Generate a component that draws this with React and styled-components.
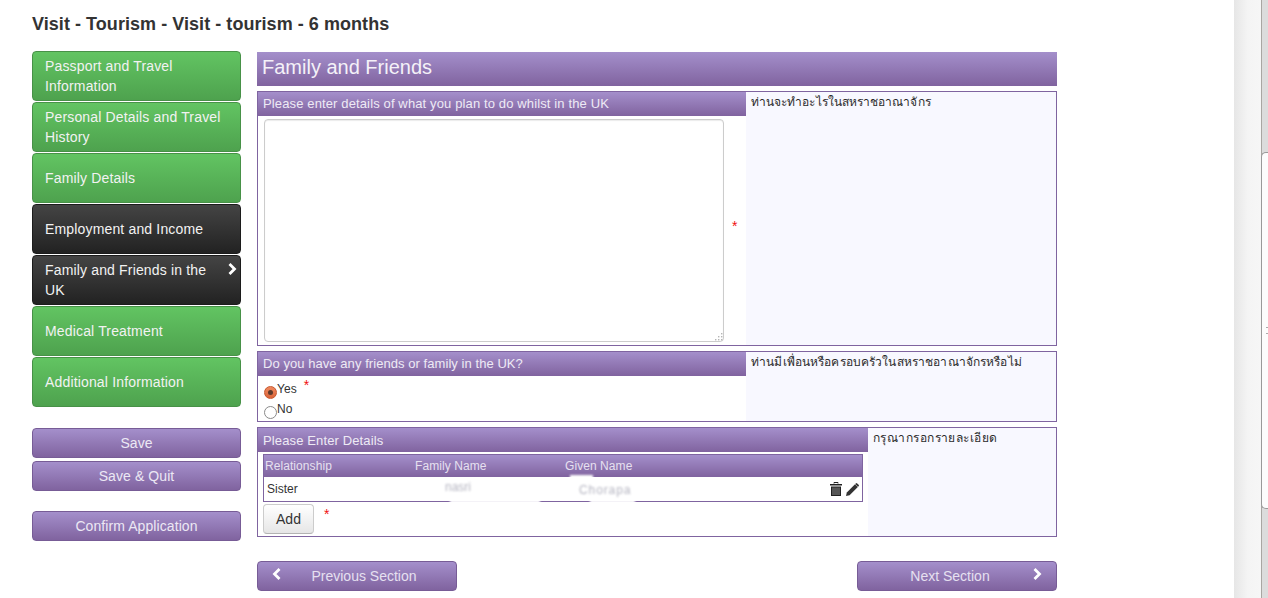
import React from 'react'
import styled, { createGlobalStyle, css } from 'styled-components'

const GlobalStyle = createGlobalStyle`
  html, body { margin: 0; padding: 0; background: #fff; overflow: hidden; }
  body { font-family: "Liberation Sans", Arial, sans-serif; color: #222; }
`

const purple = css`
  background: linear-gradient(to bottom, #a48fcb, #80639f);
`

const Shell = styled.div`
  display: flex;
  width: 1268px;
  height: 598px;
  overflow: hidden;
`

const Content = styled.div`
  width: 1202px;
  padding: 14px 0 0 32px;
`

const Title = styled.h1`
  margin: 0 0 17px;
  font-size: 18px;
  line-height: 20px;
  font-weight: bold;
  letter-spacing: 0.05px;
  color: #333;
`

const Columns = styled.div`
  display: flex;
  gap: 16px;
`

const Sidebar = styled.nav`
  width: 209px;
  flex: none;
`

const Steps = styled.div`
  display: flex;
  flex-direction: column;
  gap: 1px;
  margin-bottom: 21px;
`

const Step = styled.a`
  position: relative;
  box-sizing: border-box;
  display: flex;
  align-items: center;
  height: 50px;
  padding: 0 16px 0 12px;
  border-radius: 4px;
  font-size: 14px;
  line-height: 20px;
  letter-spacing: 0.16px;
  color: #f2f2f2;
  border: 1px solid ${p => (p.$done ? '#479147' : '#1c1c1c')};
  background: ${p => (p.$done
    ? 'linear-gradient(to bottom, #62c462, #4ea24e)'
    : 'linear-gradient(to bottom, #444, #222)')};
`

const StepName = styled.span`
  width: ${p => (p.$narrow ? '170px' : 'auto')};
`

const StepArrow = styled.svg`
  position: absolute;
  top: 7px;
  right: 3px;
  width: 10px;
  height: 12px;
`

const SideButton = styled.button`
  display: block;
  box-sizing: border-box;
  width: 209px;
  height: 30px;
  padding: 0;
  margin-top: ${p => p.$gap || 0}px;
  border: 1px solid #775c96;
  border-radius: 4px;
  ${purple}
  font-family: inherit;
  font-size: 14px;
  letter-spacing: 0.08px;
  color: #ece8f4;
`

const Main = styled.main`
  width: 800px;
  flex: none;
  padding-top: 1px;
`

const SectionTitle = styled.h2`
  margin: 0 0 5px;
  height: 34px;
  padding-left: 5px;
  ${purple}
  font-size: 20px;
  font-weight: normal;
  line-height: 31px;
  color: #f4f1f8;
`

const Section = styled.section`
  box-sizing: border-box;
  display: flex;
  height: ${p => p.$height}px;
  margin-bottom: 5px;
  border: 1px solid #7f64a0;
`

const Body = styled.div`
  width: ${p => p.$width}px;
  flex: none;
  min-width: 0;
`

const Hint = styled.div`
  flex: 1;
  padding: 1px 0 0 5px;
  background: #f8f8ff;
  font-family: "Liberation Sans", "Noto Sans", "DejaVu Sans", sans-serif;
  font-size: 12px;
  line-height: 18px;
  letter-spacing: ${p => p.$spacing}px;
  color: #2c2c2c;
`

const Label = styled.div`
  height: 24px;
  padding-left: 5px;
  ${purple}
  font-size: 13px;
  line-height: ${p => p.$line || 24}px;
  letter-spacing: ${p => p.$spacing ?? 0.13}px;
  color: #eeeaf5;
`

const AreaRow = styled.div`
  display: flex;
  align-items: center;
  padding: 3px 0 0 6px;
`

const AreaWrap = styled.div`
  position: relative;
  width: 460px;
  height: 223px;
`

const Area = styled.textarea`
  box-sizing: border-box;
  display: block;
  width: 100%;
  height: 100%;
  padding: 4px 6px;
  border: 1px solid #ccc;
  border-radius: 4px;
  box-shadow: inset 0 1px 1px rgba(0, 0, 0, 0.08);
  background: #fff;
  resize: none;
`

const Grip = styled.svg`
  position: absolute;
  right: 1px;
  bottom: 1px;
  width: 9px;
  height: 9px;
`

const Star = styled.span`
  color: #f01010;
  font-size: 14px;
  line-height: 12px;
  margin-left: ${p => p.$left || 0}px;
  margin-top: ${p => p.$top || 0}px;
  margin-bottom: ${p => p.$bottom || 0}px;
`

const RadioRow = styled.div`
  display: flex;
  align-items: flex-start;
  height: 20px;
  padding-left: 6px;
  font-size: 12px;
  line-height: 20px;
  letter-spacing: 0.08px;
  color: #333;
`

const RadioGroup = styled.div`
  padding-top: 3px;
`

const Radio = styled.span`
  box-sizing: border-box;
  display: flex;
  align-items: center;
  justify-content: center;
  width: 13px;
  height: 13px;
  margin-top: 7px;
  border-radius: 50%;
  border: 1px solid ${p => (p.$on ? '#c7562c' : '#8a8a8a')};
  background: ${p => (p.$on ? 'linear-gradient(to bottom, #f08a5f, #d9643a)' : '#fff')};

  &::after {
    content: "";
    display: ${p => (p.$on ? 'block' : 'none')};
    width: 5px;
    height: 5px;
    border-radius: 50%;
    background: #5d3a2c;
  }
`

const Table = styled.div`
  position: relative;
  box-sizing: border-box;
  width: 600px;
  height: 48px;
  margin: 2px 0 0 5px;
  border: 1px solid #7f64a0;
`

const TableHead = styled.div`
  display: grid;
  grid-template-columns: 150px 150px 1fr;
  height: 22px;
  padding-left: 1px;
  ${purple}
  font-size: 12px;
  line-height: 22px;
  letter-spacing: 0.07px;
  color: #e6e0f0;
`

const TableRow = styled.div`
  display: grid;
  grid-template-columns: 148px 150px 1fr auto;
  align-items: center;
  height: 24px;
  padding: 0 3px 0 3px;
  font-size: 12px;
  color: #333;
`

const Blurred = styled.span`
  padding-left: ${p => p.$pad}px;
  color: #b4b4c0;
  filter: blur(0.8px);
  font-size: 12px;
  letter-spacing: ${p => p.$spacing || 0}px;
  transform: translateY(${p => p.$shift || 0}px);
`

const Smudge = styled.div`
  position: absolute;
  ${p => (p.$top ? 'top: 20px;' : 'bottom: -2px;')}
  left: ${p => p.$left}px;
  width: ${p => p.$width}px;
  height: 4px;
  background: #fff;
  filter: blur(1px);
`

const RowIcons = styled.div`
  display: flex;
  gap: 4px;
  align-items: center;
`

const AddRow = styled.div`
  display: flex;
  align-items: flex-start;
  padding: 2px 0 0 5px;
`

const AddButton = styled.button`
  box-sizing: border-box;
  width: 51px;
  height: 30px;
  padding: 0;
  border: 1px solid #ccc;
  border-bottom-color: #b3b3b3;
  border-radius: 4px;
  background: linear-gradient(to bottom, #fff, #e6e6e6);
  font-family: inherit;
  font-size: 14px;
  color: #333;
`

const Pager = styled.div`
  display: flex;
  justify-content: space-between;
  margin-top: 24px;
`

const PagerButton = styled.button`
  position: relative;
  box-sizing: border-box;
  width: 200px;
  height: 30px;
  padding: ${p => (p.$next ? '0 14px 0 0' : '0 0 0 14px')};
  border: 1px solid #775c96;
  border-radius: 4px;
  ${purple}
  font-family: inherit;
  font-size: 14px;
  color: #e6e0f0;
`

const PagerArrow = styled.svg`
  position: absolute;
  top: 6px;
  ${p => (p.$right ? 'right: 14px;' : 'left: 14px;')}
  width: 10px;
  height: 12px;
`

const ScrollTrack = styled.div`
  position: relative;
  width: 34px;
  flex: none;
  background: linear-gradient(to right, #e6e6e6, #f4f4f4 40%, #f6f6f6 79%, #a9a6a2 79%, #a9a6a2 82%, #dcdcdc 82%);
`

const ScrollThumb = styled.div`
  position: absolute;
  top: 152px;
  left: 27px;
  width: 7px;
  height: 357px;
  box-sizing: border-box;
  border: 1px solid #999;
  border-right: 0;
  border-radius: 5px 0 0 5px;
  background: #fcfcfc;

  &::after {
    content: "";
    position: absolute;
    top: 174px;
    left: 4px;
    width: 3px;
    height: 5px;
    border-top: 1px solid #aaa;
    border-bottom: 1px solid #aaa;
  }
`

function Chevron({ left, ...rest }) {
  return (
    <svg viewBox="0 0 10 12" {...rest}>
      <path
        d={left ? 'M7.5 1 L2.5 6 L7.5 11' : 'M2.5 1 L7.5 6 L2.5 11'}
        fill="none"
        stroke="#fff"
        strokeWidth="2.8"
      />
    </svg>
  )
}

function Trash() {
  return (
    <svg width="12" height="14" viewBox="0 0 12 14">
      <path d="M4 1.5V.5h4v1" fill="none" stroke="#222" />
      <path d="M0 2h12v1.5H0z" fill="#222" />
      <path d="M1 4.5h10V14H1z" fill="#222" />
      <path d="M3 5.5v7.5M5 5.5v7.5M7 5.5v7.5M9 5.5v7.5" stroke="#8a8a8a" strokeWidth="1" />
    </svg>
  )
}

function Pencil() {
  return (
    <svg width="13" height="13" viewBox="0 0 13 13">
      <path d="M0 13l.8-3.6L9 1.2l2.8 2.8-8.2 8.2z" fill="#333" />
      <path d="M9.8.4a1 1 0 0 1 1.4 0l1.4 1.4a1 1 0 0 1 0 1.4l-.6.6L9.2 1z" fill="#333" />
    </svg>
  )
}

function GripDots() {
  const dots = [[7, 1], [4, 4], [7, 4], [1, 7], [4, 7], [7, 7]]
  return (
    <Grip viewBox="0 0 9 9">
      {dots.map(([x, y]) => (
        <rect key={`${x}-${y}`} x={x} y={y} width="1.4" height="1.4" fill="#b5b5b5" />
      ))}
    </Grip>
  )
}

const steps = [
  { name: 'Passport and Travel Information', done: true },
  { name: 'Personal Details and Travel History', done: true },
  { name: 'Family Details', done: true },
  { name: 'Employment and Income' },
  { name: 'Family and Friends in the UK', current: true },
  { name: 'Medical Treatment', done: true },
  { name: 'Additional Information', done: true },
]

export default function App() {
  return (
    <Shell>
      <GlobalStyle />
      <Content>
        <Title>Visit - Tourism - Visit - tourism - 6 months</Title>
        <Columns>
          <Sidebar>
            <Steps>
              {steps.map(step => (
                <Step key={step.name} $done={step.done}>
                  <StepName $narrow={step.current}>{step.name}</StepName>
                  {step.current && <StepArrow as={Chevron} />}
                </Step>
              ))}
            </Steps>
            <SideButton>Save</SideButton>
            <SideButton $gap={3}>Save &amp; Quit</SideButton>
            <SideButton $gap={20}>Confirm Application</SideButton>
          </Sidebar>
          <Main>
            <SectionTitle>Family and Friends</SectionTitle>
            <Section $height={255}>
              <Body $width={488}>
                <Label>Please enter details of what you plan to do whilst in the UK</Label>
                <AreaRow>
                  <AreaWrap>
                    <Area />
                    <GripDots />
                  </AreaWrap>
                  <Star $left={8} $bottom={10}>*</Star>
                </AreaRow>
              </Body>
              <Hint $spacing={0.07}>ท่านจะทำอะไรในสหราชอาณาจักร</Hint>
            </Section>
            <Section $height={71}>
              <Body $width={488}>
                <Label $spacing={0.06}>Do you have any friends or family in the UK?</Label>
                <RadioGroup>
                  <RadioRow>
                    <Radio $on />Yes<Star $left={7}>*</Star>
                  </RadioRow>
                  <RadioRow>
                    <Radio />No
                  </RadioRow>
                </RadioGroup>
              </Body>
              <Hint $spacing={0.13}>ท่านมีเพื่อนหรือครอบครัวในสหราชอาณาจักรหรือไม่</Hint>
            </Section>
            <Section $height={110}>
              <Body $width={610}>
                <Label $line={25}>Please Enter Details</Label>
                <Table>
                  <TableHead>
                    <span>Relationship</span>
                    <span>Family Name</span>
                    <span>Given Name</span>
                  </TableHead>
                  <TableRow>
                    <span>Sister</span>
                    <Blurred $pad={30} $shift={-2}>nasri</Blurred>
                    <Blurred $pad={14} $spacing={0.9} $shift={1}>Chorapa</Blurred>
                    <RowIcons>
                      <Trash />
                      <Pencil />
                    </RowIcons>
                  </TableRow>
                  <Smudge $left={186} $width={90} />
                  <Smudge $left={326} $width={45} />
                  <Smudge $top $left={306} $width={23} />
                </Table>
                <AddRow>
                  <AddButton>Add</AddButton>
                  <Star $left={10} $top={4}>*</Star>
                </AddRow>
              </Body>
              <Hint $spacing={0.45}>กรุณากรอกรายละเอียด</Hint>
            </Section>
            <Pager>
              <PagerButton>
                <PagerArrow as={Chevron} left="true" />
                Previous Section
              </PagerButton>
              <PagerButton $next>
                Next Section
                <PagerArrow as={Chevron} $right />
              </PagerButton>
            </Pager>
          </Main>
        </Columns>
      </Content>
      <ScrollTrack>
        <ScrollThumb />
      </ScrollTrack>
    </Shell>
  )
}
